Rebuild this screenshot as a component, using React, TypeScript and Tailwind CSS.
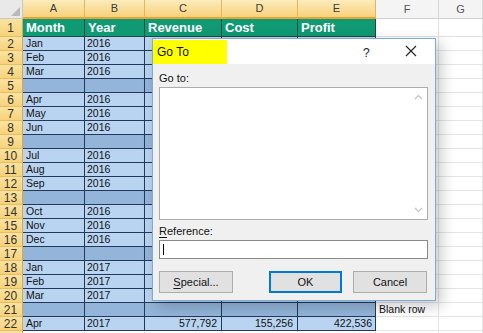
import React from "react";

const COLS = [
  { k: "A", w: 62 },
  { k: "B", w: 60 },
  { k: "C", w: 77 },
  { k: "D", w: 76 },
  { k: "E", w: 78 },
  { k: "F", w: 63 },
  { k: "G", w: 44 },
];

type Row = { n: number; m?: string; y?: string; c?: string; d?: string; e?: string; f?: string; blank?: boolean };

const ROWS: Row[] = [
  { n: 2, m: "Jan", y: "2016" },
  { n: 3, m: "Feb", y: "2016" },
  { n: 4, m: "Mar", y: "2016" },
  { n: 5, blank: true },
  { n: 6, m: "Apr", y: "2016" },
  { n: 7, m: "May", y: "2016" },
  { n: 8, m: "Jun", y: "2016" },
  { n: 9, blank: true },
  { n: 10, m: "Jul", y: "2016" },
  { n: 11, m: "Aug", y: "2016" },
  { n: 12, m: "Sep", y: "2016" },
  { n: 13, blank: true },
  { n: 14, m: "Oct", y: "2016" },
  { n: 15, m: "Nov", y: "2016" },
  { n: 16, m: "Dec", y: "2016" },
  { n: 17, blank: true },
  { n: 18, m: "Jan", y: "2017" },
  { n: 19, m: "Feb", y: "2017" },
  { n: 20, m: "Mar", y: "2017" },
  { n: 21, blank: true, f: "Blank row" },
  { n: 22, m: "Apr", y: "2017", c: "577,792", d: "155,256", e: "422,536" },
  { n: 23 },
];

function RowHeader({ n, h }: { n: number | string; h: string }) {
  return (
    <div
      className={`w-[23px] ${h} shrink-0 flex items-center justify-center bg-gradient-to-b from-[#fbe3a0] to-[#f6d27a] border-b border-[#e6bd62] border-r border-r-[#e0a83c] text-[12px] text-[#333] pr-[1px]`}
    >
      {n}
    </div>
  );
}

export default function App() {
  const data = "bg-[#b8d4f1]";
  const blank = "bg-[#93b5d9]";
  const bd = "border-r border-b border-[#24385a]";
  return (
    <div
      className="relative w-[483px] h-[333px] overflow-hidden bg-white"
      style={{ fontFamily: '"Liberation Sans", Arial, sans-serif' }}
    >
      {/* column header row */}
      <div className="flex h-[19px]">
        <div className="w-[23px] h-[19px] shrink-0 bg-[#e9e9e9] border-r border-b border-[#c9c9c9] relative">
          <div className="absolute right-[2px] bottom-[2px] w-0 h-0 border-l-[9px] border-l-transparent border-b-[9px] border-b-[#b9b9b9]" />
        </div>
        {COLS.map((c, i) => (
          <div
            key={c.k}
            style={{ width: c.w }}
            className={
              i < 5
                ? "shrink-0 h-[19px] flex items-center justify-center text-[11px] text-[#3a3a3a] bg-gradient-to-b from-[#fcebbb] to-[#f7d27a] border-r border-[#e2b85c] border-b-2 border-b-[#e6a33a]"
                : "shrink-0 h-[19px] flex items-center justify-center text-[11px] text-[#555] bg-[#f4f4f4] border-r border-[#d6d6d6] border-b border-b-[#cfcfcf]"
            }
          >
            {c.k}
          </div>
        ))}
      </div>

      {/* row 1 */}
      <div className="flex h-[18px]">
        <RowHeader n={1} h="h-[18px]" />
        {["Month", "Year", "Revenue", "Cost", "Profit"].map((t, i) => (
          <div
            key={t}
            style={{ width: COLS[i].w }}
            className="shrink-0 h-[18px] flex items-center pl-[3px] bg-[#0f9a73] text-white font-bold text-[13px] border-r border-b border-[#1f4a44]"
          >
            {t}
          </div>
        ))}
        <div style={{ width: COLS[5].w }} className="shrink-0 h-[18px] border-r border-b border-[#e1e1e1]" />
        <div style={{ width: COLS[6].w }} className="shrink-0 h-[18px] border-r border-b border-[#e1e1e1]" />
      </div>

      {ROWS.map((r) => {
        const bg = r.n === 23 ? "bg-white" : r.blank ? blank : data;
        const inData = r.n !== 23;
        return (
          <div key={r.n} className="flex h-[14px]">
            <RowHeader n={r.n === 23 ? "" : r.n} h="h-[14px]" />
            <div style={{ width: COLS[0].w }} className={`shrink-0 h-[14px] flex items-center pl-[3px] text-[10.5px] text-[#111] ${inData ? `${bg} ${bd}` : "border-r border-[#e1e1e1]"}`}>
              {r.m}
            </div>
            <div style={{ width: COLS[1].w }} className={`shrink-0 h-[14px] flex items-center pl-[2px] text-[10.5px] text-[#111] ${inData ? `${bg} ${bd}` : "border-r border-[#e1e1e1]"}`}>
              {r.y}
            </div>
            <div style={{ width: COLS[2].w }} className={`shrink-0 h-[14px] flex items-center justify-end pr-[4px] text-[10.5px] text-[#111] ${inData ? `${bg} ${bd}` : "border-r border-[#e1e1e1]"}`}>
              {r.c}
            </div>
            <div style={{ width: COLS[3].w }} className={`shrink-0 h-[14px] flex items-center justify-end pr-[4px] text-[10.5px] text-[#111] ${inData ? `${bg} ${bd}` : "border-r border-[#e1e1e1]"}`}>
              {r.d}
            </div>
            <div style={{ width: COLS[4].w }} className={`shrink-0 h-[14px] flex items-center justify-end pr-[3px] text-[10.5px] text-[#111] ${inData ? `${bg} ${bd}` : "border-r border-[#e1e1e1]"}`}>
              {r.e}
            </div>
            <div style={{ width: COLS[5].w }} className="shrink-0 h-[14px] flex items-center pl-[3px] text-[10.5px] text-[#111] whitespace-nowrap border-r border-b border-[#e4e4e4]">
              {r.f}
            </div>
            <div style={{ width: COLS[6].w }} className="shrink-0 h-[14px] border-r border-b border-[#e4e4e4]" />
          </div>
        );
      })}

      {/* Go To dialog */}
      <div className="absolute left-[152px] top-[38px] w-[284px] h-[263px] bg-[#f0f0f0] border border-[#7eaad6] shadow-[5px_5px_14px_rgba(0,0,0,0.22)] flex flex-col">
        <div className="h-[25px] bg-white flex items-center relative shrink-0">
          <div className="w-[74px] h-[24px] bg-[#ffff00] flex items-center pl-[4px] text-[12px] text-[#111]">Go To</div>
          <div className="absolute left-[210px] top-[5px] text-[12px] text-[#222]">?</div>
          <svg className="absolute left-[252px] top-[6px]" width="12" height="12" viewBox="0 0 12 12">
            <path d="M1 1 L11 11 M11 1 L1 11" stroke="#222" strokeWidth="1.1" />
          </svg>
        </div>
        <div className="flex flex-col px-[6px]">
          <div className="mt-[7px] h-[14px] flex items-center text-[11px] text-[#111]">Go to:</div>
          <div className="mt-[2px] w-[269px] h-[133px] bg-white border border-[#acacac] relative">
            <svg className="absolute right-[4px] top-[6px]" width="9" height="6" viewBox="0 0 9 6">
              <path d="M1 5 L4.5 1.5 L8 5" stroke="#c2c2c2" strokeWidth="1.2" fill="none" />
            </svg>
            <svg className="absolute right-[4px] bottom-[6px]" width="9" height="6" viewBox="0 0 9 6">
              <path d="M1 1 L4.5 4.5 L8 1" stroke="#c2c2c2" strokeWidth="1.2" fill="none" />
            </svg>
          </div>
          <div className="mt-[4px] h-[14px] flex items-center text-[11px] text-[#111]">
            <span className="underline underline-offset-2">R</span>eference:
          </div>
          <div className="mt-[2px] w-[269px] h-[19px] bg-white border border-[#8a8a8a] relative">
            <div className="absolute left-[3px] top-[3px] w-[1px] h-[11px] bg-black" />
          </div>
          <div className="mt-[12px] flex h-[22px]">
            <div className="w-[74px] h-[22px] bg-[#e1e1e1] border border-[#adadad] flex items-center justify-center text-[11px] text-[#111]">
              <span className="underline underline-offset-2">S</span>pecial...
            </div>
            <div className="ml-[36px] w-[73px] h-[22px] bg-[#e1e1e1] border-2 border-[#0078d7] flex items-center justify-center text-[11px] text-[#111]">
              OK
            </div>
            <div className="ml-[11px] w-[74px] h-[22px] bg-[#e1e1e1] border border-[#adadad] flex items-center justify-center text-[11px] text-[#111]">
              Cancel
            </div>
          </div>
        </div>
      </div>
    </div>
  );
}
